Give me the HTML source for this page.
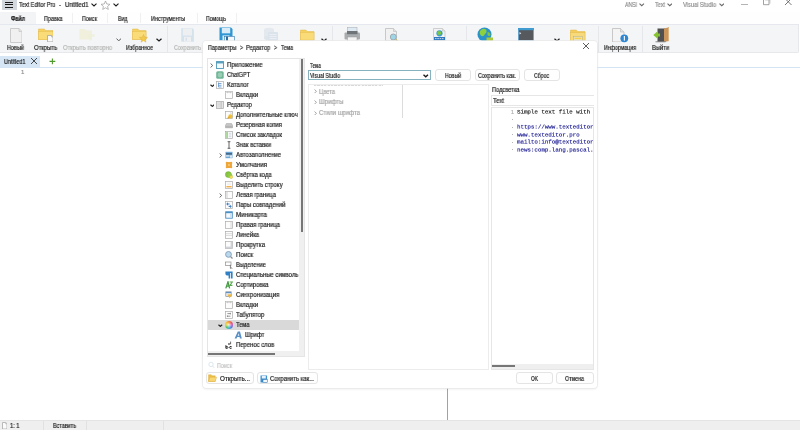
<!DOCTYPE html>
<html><head><meta charset="utf-8"><title>Text Editor Pro</title>
<style>
html,body{margin:0;padding:0;}
body{width:800px;height:430px;position:relative;overflow:hidden;background:#fff;font-family:"Liberation Sans",sans-serif;font-size:6.3px;color:#1a1a1a;}
.a{position:absolute;}
.t{position:absolute;white-space:nowrap;line-height:10px;height:10px;font-size:6.3px;transform-origin:0 50%;-webkit-text-stroke:0.18px;will-change:transform;}
.mono{font-family:"Liberation Mono",monospace;-webkit-text-stroke:0.45px;}
.btn{position:absolute;box-sizing:border-box;border:0.9px solid #e4e4e4;border-radius:3px;background:#fefefe;}
</style></head><body>
<div class="a" style="left:2.3px;top:0px;width:14.4px;height:10px;background:#d3d7de;"></div><div class="a" style="left:5px;top:1.6999999999999997px;width:7.6px;height:1.2px;background:#1a1a1a;"></div><div class="a" style="left:5px;top:4.300000000000001px;width:7.6px;height:1.2px;background:#1a1a1a;"></div><div class="a" style="left:5px;top:6.800000000000001px;width:7.6px;height:1.2px;background:#1a1a1a;"></div><div class="t" style="left:18.6px;top:0.35px;transform:scaleX(0.881);">Text Editor Pro</div><div class="t" style="left:58.5px;top:0.35px;transform:scaleX(0.948);">-</div><div class="t" style="left:65px;top:0.35px;transform:scaleX(0.945);">Untitled1</div><svg class="a" style="left:90.5px;top:3.25px" width="6" height="4.0" viewBox="0 0 6 4.0"><path d="M0.5 0.7 L3.0 3.0 L5.5 0.7" fill="none" stroke="#1a1a1a" stroke-width="1.1"/></svg><svg class="a" style="left:100px;top:0px" width="11" height="10" viewBox="0 0 11 10"><path d="M5.5 1 L6.8 4 L10 4.3 L7.6 6.4 L8.3 9.4 L5.5 7.8 L2.7 9.4 L3.4 6.4 L1 4.3 L4.2 4 Z" fill="none" stroke="#9a9a9a" stroke-width="0.7"/></svg><svg class="a" style="left:112.5px;top:3.25px" width="6" height="4.0" viewBox="0 0 6 4.0"><path d="M0.5 0.7 L3.0 3.0 L5.5 0.7" fill="none" stroke="#1a1a1a" stroke-width="1.1"/></svg><div class="t" style="left:625px;top:-0.15px;transform:scaleX(0.816);color:#8c8c8c;">ANSI</div><svg class="a" style="left:639.0px;top:3.175px" width="5.5" height="3.75" viewBox="0 0 5.5 3.75"><path d="M0.5 0.7 L2.75 2.75 L5.0 0.7" fill="none" stroke="#6a6a6a" stroke-width="1.1"/></svg><div class="t" style="left:654.5px;top:-0.15px;transform:scaleX(0.865);color:#8c8c8c;">Text</div><svg class="a" style="left:666.5px;top:3.175px" width="5.5" height="3.75" viewBox="0 0 5.5 3.75"><path d="M0.5 0.7 L2.75 2.75 L5.0 0.7" fill="none" stroke="#6a6a6a" stroke-width="1.1"/></svg><div class="t" style="left:683px;top:-0.15px;transform:scaleX(0.901);color:#8c8c8c;">Visual Studio</div><svg class="a" style="left:718.5px;top:3.175px" width="5.5" height="3.75" viewBox="0 0 5.5 3.75"><path d="M0.5 0.7 L2.75 2.75 L5.0 0.7" fill="none" stroke="#6a6a6a" stroke-width="1.1"/></svg><div class="a" style="left:741px;top:4.1px;width:6.5px;height:0.8px;background:#b4b4b4;"></div><svg class="a" style="left:762px;top:0px" width="9" height="6" viewBox="0 0 9 6"><path d="M1.5 0 V4.7 H7 V0" fill="none" stroke="#8a8a8a" stroke-width="0.8"/><path d="M3 0 H8 V3.5" fill="none" stroke="#b0b0b0" stroke-width="0.6"/></svg><svg class="a" style="left:784px;top:0px" width="9" height="6" viewBox="0 0 9 6"><path d="M1 -1.5 L7.5 5 M7.5 -1.5 L1 5" fill="none" stroke="#555" stroke-width="0.8"/></svg><div class="a" style="left:0px;top:12px;width:800px;height:12px;background:#fefefe;"></div><div class="a" style="left:0px;top:12.9px;width:34.7px;height:11.5px;background:#f3f4f6;box-shadow:0 0 0 0.6px #e9ebee;"></div><div class="a" style="left:72px;top:13px;width:0.8px;height:10px;background:#f0f0f2;"></div><div class="a" style="left:106.5px;top:13px;width:0.8px;height:10px;background:#f0f0f2;"></div><div class="a" style="left:140px;top:13px;width:0.8px;height:10px;background:#f0f0f2;"></div><div class="a" style="left:196.5px;top:13px;width:0.8px;height:10px;background:#f0f0f2;"></div><div class="a" style="left:236px;top:13px;width:0.8px;height:10px;background:#f0f0f2;"></div><div class="t" style="left:10.5px;top:14.05px;transform:scaleX(0.836);font-weight:bold;">Файл</div><div class="t" style="left:44px;top:14.05px;transform:scaleX(0.869);">Правка</div><div class="t" style="left:82px;top:14.05px;transform:scaleX(0.859);">Поиск</div><div class="t" style="left:118px;top:14.05px;transform:scaleX(0.833);">Вид</div><div class="t" style="left:151px;top:14.05px;transform:scaleX(0.866);">Инструменты</div><div class="t" style="left:206px;top:14.05px;transform:scaleX(0.822);">Помощь</div><div class="a" style="left:0px;top:24px;width:797.8px;height:28.4px;background:#f4f5f6;border-bottom:0.9px solid #e6e8eb;border-right:0.9px solid #e6e8eb;border-radius:0 0 2px 0;"></div><div class="a" style="left:0px;top:23.6px;width:798.6px;height:0.8px;background:#e6e8ef;"></div><div class="a" style="left:167.1px;top:26px;width:0.8px;height:26px;background:#e6e7ea;"></div><div class="a" style="left:332.1px;top:26px;width:0.8px;height:26px;background:#e6e7ea;"></div><div class="a" style="left:466.1px;top:26px;width:0.8px;height:26px;background:#e6e7ea;"></div><div class="a" style="left:598.1px;top:26px;width:0.8px;height:26px;background:#e6e7ea;"></div><div class="a" style="left:642.1px;top:26px;width:0.8px;height:26px;background:#e6e7ea;"></div><svg class="a" style="left:9.5px;top:28px" width="12.5" height="15" viewBox="0 0 12.5 15"><path d="M0.5 0.5 H9.0 L12.0 3.5 V14.5 H0.5 Z" fill="#f0f0f0" stroke="#c0c0c0" stroke-width="0.8"/><path d="M9.0 0.5 V3.5 H12.0" fill="#e2e2e2" stroke="#c0c0c0" stroke-width="0.6"/></svg><svg class="a" style="left:37.5px;top:27.8px" width="15.5" height="12.2" viewBox="0 0 15.5 12.2"><g opacity="1"><path d="M0.5 1 H6.2 L7.75 2.5 H15.0 V11.7 H0.5 Z" fill="#f5d15f" stroke="#e2b84a" stroke-width="0.5"/><rect x="0.5" y="3.6599999999999997" width="14.5" height="8.04" fill="#f9dc78" stroke="#e2b84a" stroke-width="0.4"/></g></svg><svg class="a" style="left:46.5px;top:35px" width="6.6" height="7.4" viewBox="0 0 6.6 7.4"><path d="M0.5 0.5 H4.6 L6.1 2 V6.9 H0.5 Z" fill="#fafafa" stroke="#a5a5a5" stroke-width="0.8"/><path d="M4.6 0.5 V2 H6.1" fill="#e2e2e2" stroke="#a5a5a5" stroke-width="0.6"/></svg><svg class="a" style="left:79px;top:27.5px" width="18" height="14" viewBox="0 0 18 14"><path d="M0.5 1 H6 L7 2.4 H13 V11.5 H0.5Z" fill="#f0f0da" opacity="0.9"/><path d="M9 6 H15.5 V9 H12.5 V12.5 H10.5 V9 H9Z" fill="#eef0dc" opacity="0.8"/></svg><svg class="a" style="left:115.5px;top:37.575px" width="5.5" height="3.75" viewBox="0 0 5.5 3.75"><path d="M0.5 0.7 L2.75 2.75 L5.0 0.7" fill="none" stroke="#5a5a5a" stroke-width="1.0"/></svg><svg class="a" style="left:132px;top:28px" width="14.5" height="12" viewBox="0 0 14.5 12"><g opacity="1"><path d="M0.5 1 H5.800000000000001 L7.25 2.5 H14.0 V11.5 H0.5 Z" fill="#f5d15f" stroke="#e2b84a" stroke-width="0.5"/><rect x="0.5" y="3.5999999999999996" width="13.5" height="7.899999999999999" fill="#f9dc78" stroke="#e2b84a" stroke-width="0.4"/></g></svg><svg class="a" style="left:139px;top:34px" width="9" height="9" viewBox="0 0 9 9"><path d="M4.5 0.5 L5.6 3.2 L8.5 3.4 L6.3 5.3 L7 8.2 L4.5 6.6 L2 8.2 L2.7 5.3 L0.5 3.4 L3.4 3.2 Z" fill="#f3c94a" stroke="#d9a93a" stroke-width="0.4"/></svg><svg class="a" style="left:156.0px;top:37.55px" width="6" height="4.0" viewBox="0 0 6 4.0"><path d="M0.5 0.7 L3.0 3.0 L5.5 0.7" fill="none" stroke="#1a1a1a" stroke-width="1.2"/></svg><svg class="a" style="left:180.5px;top:28px" width="13.2" height="14" viewBox="0 0 13.2 14"><g opacity="0.85"><path d="M0.3 0.3 H11.4 L12.9 1.8 V13.7 H0.3 Z" fill="#cfdfeb"/><rect x="1.8" y="0.6" width="9.2" height="7" fill="#eceef0"/><rect x="3" y="8.8" width="7" height="4.9" fill="#eef0f2"/><rect x="4.6" y="9.8" width="1.4" height="3" fill="#d3dde6"/></g></svg><svg class="a" style="left:219px;top:27px" width="14" height="14" viewBox="0 0 14 14"><g opacity="1"><path d="M0.5 0.5 H12 L13.5 2 V13.5 H0.5 Z" fill="#2e96d3"/><rect x="2.8000000000000003" y="1" width="8.4" height="5.32" fill="#d9ecf7"/><rect x="3.5" y="8.4" width="7.0" height="5.1000000000000005" fill="#fff" opacity="0.85"/></g></svg><svg class="a" style="left:224px;top:36px" width="12" height="6" viewBox="0 0 12 6"><rect x="0.3" y="0.3" width="10" height="6" fill="#f4f8fb" stroke="#2e78b0" stroke-width="0.6"/><rect x="2" y="0.5" width="2" height="5" fill="#2e6da0"/></svg><svg class="a" style="left:262px;top:27px" width="17" height="15" viewBox="0 0 17 15"><g opacity="0.75"><ellipse cx="7" cy="3" rx="5" ry="2.3" fill="#dfe6ee"/><rect x="2" y="3" width="10" height="8" fill="#dfe6ee"/><ellipse cx="7" cy="11" rx="5" ry="2.3" fill="#d7e0ea"/><rect x="6" y="5" width="10" height="9" rx="1" fill="#d3dde8"/><path d="M7.5 7.5H14.5M7.5 9.5H14.5M7.5 11.5H14.5" stroke="#eef2f6" stroke-width="0.8"/></g></svg><svg class="a" style="left:300px;top:29px" width="14.5" height="11.5" viewBox="0 0 14.5 11.5"><g opacity="1"><path d="M0.5 1 H5.800000000000001 L7.25 2.5 H14.0 V11.0 H0.5 Z" fill="#f5d15f" stroke="#e2b84a" stroke-width="0.5"/><rect x="0.5" y="3.4499999999999997" width="13.5" height="7.549999999999999" fill="#f9dc78" stroke="#e2b84a" stroke-width="0.4"/></g></svg><svg class="a" style="left:320.5px;top:37.55px" width="6" height="4.0" viewBox="0 0 6 4.0"><path d="M0.5 0.7 L3.0 3.0 L5.5 0.7" fill="none" stroke="#1a1a1a" stroke-width="1.2"/></svg><svg class="a" style="left:344px;top:27px" width="17" height="15" viewBox="0 0 17 15"><rect x="3.5" y="0.5" width="9.5" height="6" fill="#dfe9f2" stroke="#aab4bd" stroke-width="0.6"/><rect x="0.5" y="5.5" width="15.5" height="7" rx="1" fill="#a9adb0"/><rect x="3" y="4" width="10.5" height="3.2" fill="#6f7478"/><rect x="3.5" y="10" width="9.5" height="4.3" fill="#f3f3f3" stroke="#999" stroke-width="0.5"/></svg><svg class="a" style="left:385px;top:27.5px" width="12" height="13.5" viewBox="0 0 12 13.5"><path d="M0.5 0.5 H8.5 L11.5 3.5 V13.0 H0.5 Z" fill="#f1f1f1" stroke="#bcbcbc" stroke-width="0.8"/><path d="M8.5 0.5 V3.5 H11.5" fill="#e2e2e2" stroke="#bcbcbc" stroke-width="0.6"/></svg><svg class="a" style="left:389px;top:33px" width="10" height="9" viewBox="0 0 10 9"><circle cx="4.3" cy="4" r="3" fill="#9fd6e6" stroke="#9aa4ab" stroke-width="0.9"/><path d="M6.6 6.3 L8.8 8.3" stroke="#c9b45a" stroke-width="1.2"/></svg><svg class="a" style="left:433px;top:27.5px" width="12.5" height="13.5" viewBox="0 0 12.5 13.5"><path d="M0.5 0.5 H9.5 L12.0 3 V13.0 H0.5 Z" fill="#f3f3f3" stroke="#c4c4c4" stroke-width="0.8"/><path d="M9.5 0.5 V3 H12.0" fill="#e2e2e2" stroke="#c4c4c4" stroke-width="0.6"/></svg><svg class="a" style="left:434px;top:29px" width="11" height="12" viewBox="0 0 11 12"><circle cx="5.5" cy="4.3" r="3.1" fill="#3aa0c8"/><circle cx="5.2" cy="4" r="2" fill="#7dc843"/><rect x="0" y="8" width="11" height="3.2" fill="#2f78c0"/><path d="M1 9.6H10" stroke="#cfe3f5" stroke-width="0.9" stroke-dasharray="1.6 0.7"/></svg><svg class="a" style="left:476.5px;top:26.5px" width="17" height="16" viewBox="0 0 17 16"><circle cx="7.5" cy="7.5" r="7" fill="#2b93c9"/><path d="M3 4 Q6 0.5 9 2.5 Q10.5 5 8 7 Q6.5 10 4.5 9 Q2 7 3 4Z" fill="#8ed13f"/><path d="M10.5 5 Q13 5 13.5 8 Q12 10 10.5 8Z" fill="#7bc63a"/><rect x="9.5" y="10.5" width="6.5" height="4" fill="#a8c93a"/></svg><svg class="a" style="left:518px;top:28px" width="16" height="13" viewBox="0 0 16 13"><rect x="0.4" y="0.4" width="15" height="12" fill="#565a5e" stroke="#5aa5d2" stroke-width="0.8"/><rect x="0" y="0" width="15.8" height="2.2" fill="#3f9bd0"/><path d="M1.5 4 L3.3 5.3 L1.5 6.6Z" fill="#e8e8e8"/></svg><svg class="a" style="left:553.5px;top:37.55px" width="6" height="4.0" viewBox="0 0 6 4.0"><path d="M0.5 0.7 L3.0 3.0 L5.5 0.7" fill="none" stroke="#1a1a1a" stroke-width="1.2"/></svg><svg class="a" style="left:570px;top:29px" width="15.5" height="12.5" viewBox="0 0 15.5 12.5"><g opacity="1"><path d="M0.5 1 H6.2 L7.75 2.5 H15.0 V12.0 H0.5 Z" fill="#f3cc5c" stroke="#e2b84a" stroke-width="0.5"/><rect x="0.5" y="3.75" width="14.5" height="8.25" fill="#f7da7c" stroke="#e2b84a" stroke-width="0.4"/></g></svg><svg class="a" style="left:573px;top:36px" width="10" height="5" viewBox="0 0 10 5"><rect x="0.4" y="0.4" width="9" height="4.6" fill="#e9e4c9" stroke="#b9ad78" stroke-width="0.5"/><rect x="1.5" y="1.6" width="6.8" height="1.6" fill="#f5d24e"/></svg><svg class="a" style="left:612px;top:27.5px" width="12.5" height="14.5" viewBox="0 0 12.5 14.5"><path d="M0.5 0.5 H8.5 L12.0 4 V14.0 H0.5 Z" fill="#f4f4f4" stroke="#bcbcbc" stroke-width="0.8"/><path d="M8.5 0.5 V4 H12.0" fill="#e2e2e2" stroke="#bcbcbc" stroke-width="0.6"/></svg><svg class="a" style="left:619.5px;top:34px" width="9" height="9" viewBox="0 0 9 9"><circle cx="4.3" cy="4.3" r="3.9" fill="#2f86d0"/><rect x="3.8" y="2" width="1.1" height="4.6" fill="#fff"/></svg><svg class="a" style="left:652.5px;top:26.5px" width="17" height="16" viewBox="0 0 17 16"><rect x="4.5" y="1.5" width="8" height="13.5" fill="#4e5052"/><path d="M11 1.5 L16 0.3 V14 L11 15Z" fill="#c8955a"/><path d="M15.2 0.5 L16 0.3 V14 L15.2 14.2Z" fill="#e2bd8e"/><rect x="2.5" y="14.3" width="10" height="1" fill="#8a8a8a"/><path d="M0.3 8 L4 4.8 V6.6 H7 V9.4 H4 V11.2Z" fill="#86c232"/></svg><div class="t" style="left:6.5px;top:43.35px;transform:scaleX(0.864);">Новый</div><div class="t" style="left:33.7px;top:43.35px;transform:scaleX(0.934);">Открыть</div><div class="t" style="left:63px;top:43.35px;transform:scaleX(0.917);color:#b4b4b4;">Открыть повторно</div><div class="t" style="left:125.5px;top:43.35px;transform:scaleX(0.846);">Избранное</div><div class="t" style="left:174px;top:43.35px;transform:scaleX(0.863);color:#b4b4b4;">Сохранить</div><div class="t" style="left:604px;top:43.35px;transform:scaleX(0.830);">Информация</div><div class="t" style="left:652px;top:43.35px;transform:scaleX(0.911);">Выйти</div><div class="a" style="left:0px;top:55.7px;width:40.3px;height:11.6px;background:#d6e6f4;"></div><div class="a" style="left:0px;top:67.2px;width:800px;height:0.9px;background:#d3e5f5;"></div><div class="t" style="left:3.7px;top:56.85px;transform:scaleX(0.865);">Untitled1</div><svg class="a" style="left:30px;top:57.2px" width="8" height="8" viewBox="0 0 8 8"><path d="M1 1 L7 7 M7 1 L1 7" stroke="#222" stroke-width="0.8" fill="none"/></svg><svg class="a" style="left:49px;top:57.5px" width="7" height="7" viewBox="0 0 7 7"><path d="M3.4 0.5 V6.3 M0.5 3.4 H6.3" stroke="#4e9a2c" stroke-width="1.1" fill="none"/></svg><div class="t" style="left:21.2px;top:67.35px;font-size:6px;color:#929292;">1</div><div class="a" style="left:447.05px;top:68px;width:0.75px;height:352px;background:#a2a2a2;"></div><div class="a" style="left:0px;top:420px;width:800px;height:10px;background:#efefef;"></div><div class="a" style="left:0px;top:419.6px;width:800px;height:0.7px;background:#e4e4e4;"></div><div class="a" style="left:43.1px;top:421px;width:0.8px;height:9px;background:#e1e1e1;"></div><div class="a" style="left:86.1px;top:421px;width:0.8px;height:9px;background:#e1e1e1;"></div><div class="a" style="left:163.1px;top:421px;width:0.8px;height:9px;background:#e1e1e1;"></div><svg class="a" style="left:1.5px;top:421.5px" width="5.5" height="7.5" viewBox="0 0 5.5 7.5"><path d="M0.5 0.5 H3.7 L5.0 1.8 V7.0 H0.5 Z" fill="#fbfbfb" stroke="#aaa" stroke-width="0.8"/><path d="M3.7 0.5 V1.8 H5.0" fill="#e2e2e2" stroke="#aaa" stroke-width="0.6"/></svg><div class="t" style="left:10px;top:420.65px;transform:scaleX(0.903);">1: 1</div><div class="t" style="left:53px;top:420.65px;transform:scaleX(0.861);">Вставить</div><div class="a" style="left:203.2px;top:40.6px;width:394.2px;height:347.4px;background:#fff;border-radius:3px;box-shadow:0 0 0 0.7px #e9e9e9,0 1px 3px rgba(0,0,0,.09);"></div><div class="t" style="left:207.75px;top:43.35px;transform:scaleX(0.849);">Параметры</div><div class="t" style="left:239.6px;top:43.35px;transform:scaleX(0.814);">&gt;</div><div class="t" style="left:245.9px;top:43.35px;transform:scaleX(0.898);">Редактор</div><div class="t" style="left:274.25px;top:43.35px;transform:scaleX(0.814);">&gt;</div><div class="t" style="left:280.9px;top:43.35px;transform:scaleX(0.816);">Тема</div><svg class="a" style="left:582.2px;top:41.6px" width="8" height="8" viewBox="0 0 8 8"><path d="M1 1 L7 7 M7 1 L1 7" stroke="#333" stroke-width="0.8" fill="none"/></svg><div class="a" style="left:207px;top:58px;width:98px;height:299px;box-sizing:border-box;border:1px solid #e5e5e5;background:#fff;"></div><div class="a" style="left:299px;top:59px;width:5px;height:292px;background:#f0f0f0;"></div><div class="a" style="left:301.3px;top:59px;width:1.9px;height:173.3px;background:#767676;"></div><div class="a" style="left:208px;top:351px;width:96px;height:5px;background:#f0f0f0;"></div><div class="a" style="left:207.5px;top:353px;width:67.5px;height:1.7px;background:#767676;"></div><div class="a" style="left:207.5px;top:320.3px;width:91.5px;height:9.6px;background:#d9d9d9;"></div><svg class="a" style="left:215.9px;top:61px" width="8" height="8" viewBox="0 0 8 8"><rect x="0.5" y="0.6" width="7" height="6.9" fill="#f4f9fc" stroke="#4f98b8" stroke-width="0.9"/><rect x="0.5" y="0.6" width="7" height="1.3" fill="#4f98b8"/><rect x="1" y="2.2" width="6" height="0.7" fill="#8fc1d6"/></svg><div class="t" style="left:227px;top:60.35px;transform:scaleX(0.961);">Приложение</div><svg class="a" style="left:210.1px;top:62.7px" width="3.3" height="5" viewBox="0 0 3.3 5"><path d="M0.6 0.5 L2.6999999999999997 2.5 L0.6 4.5" fill="none" stroke="#555" stroke-width="0.9"/></svg><svg class="a" style="left:215.9px;top:71px" width="8" height="8" viewBox="0 0 8 8"><rect x="0.2" y="0.2" width="7.5" height="7.6" rx="1.5" fill="#6fb596"/><circle cx="4" cy="4" r="2.4" fill="#9bcdb5"/></svg><div class="t" style="left:227px;top:70.35px;transform:scaleX(0.876);">ChatGPT</div><svg class="a" style="left:215.9px;top:81px" width="8" height="8" viewBox="0 0 8 8"><rect x="0.4" y="0.4" width="7.2" height="7.2" fill="#fcfcfc" stroke="#ababab" stroke-width="0.7"/><path d="M2.5 1.5 V6 M2.5 2.5 H5.5 M2.5 4.3 H5.5 M2.5 6 H5.5" stroke="#4a86c5" stroke-width="0.7" fill="none"/></svg><div class="t" style="left:227px;top:80.35px;transform:scaleX(0.960);">Каталог</div><svg class="a" style="left:209.5px;top:83.575px" width="4.7" height="3.35" viewBox="0 0 4.7 3.35"><path d="M0.5 0.7 L2.35 2.35 L4.2 0.7" fill="none" stroke="#222" stroke-width="1.2"/></svg><svg class="a" style="left:224.9px;top:91px" width="8" height="8" viewBox="0 0 8 8"><rect x="0.4" y="0.4" width="7.2" height="7.2" fill="#fcfcfc" stroke="#ababab" stroke-width="0.7"/><rect x="0.6" y="0.6" width="6.8" height="1.2" fill="#d9d9d9"/><rect x="2.6" y="0.6" width="0.5" height="1.6" fill="#aaa"/><rect x="4.9" y="0.6" width="0.5" height="1.6" fill="#aaa"/></svg><div class="t" style="left:236px;top:90.35px;transform:scaleX(0.911);">Вкладки</div><svg class="a" style="left:215.9px;top:101px" width="8" height="8" viewBox="0 0 8 8"><rect x="0.4" y="0.4" width="7.2" height="7.2" fill="#e4e4e4" stroke="#a9a9a9" stroke-width="0.7"/><rect x="4.6" y="0.8" width="1" height="6.4" fill="#b9b9b9"/><path d="M1.6 2.2H4M1.6 3.6H4M1.6 5H4" stroke="#cfcfcf" stroke-width="0.5"/></svg><div class="t" style="left:227px;top:100.35px;transform:scaleX(0.922);">Редактор</div><svg class="a" style="left:209.5px;top:103.575px" width="4.7" height="3.35" viewBox="0 0 4.7 3.35"><path d="M0.5 0.7 L2.35 2.35 L4.2 0.7" fill="none" stroke="#222" stroke-width="1.2"/></svg><svg class="a" style="left:224.9px;top:111px" width="8" height="8" viewBox="0 0 8 8"><rect x="0.4" y="0.4" width="7.2" height="7.2" fill="#fcfcfc" stroke="#ababab" stroke-width="0.7"/><path d="M5.2 0.4 L7.6 2.8 H5.2Z" fill="#dcdcdc"/><circle cx="5.4" cy="5.4" r="2.1" fill="#efbf3a"/><path d="M2.6 7.4 L4.6 5.8" stroke="#dfa528" stroke-width="1.3"/></svg><div class="t" style="left:236px;top:110.35px;transform:scaleX(0.935);">Дополнительные ключ</div><svg class="a" style="left:224.9px;top:121px" width="8" height="8" viewBox="0 0 8 8"><path d="M1.3 2.6 H6.7 L7.5 4.6 V6.8 H0.5 V4.6 Z" fill="#c9c9c9" stroke="#9d9d9d" stroke-width="0.5"/><rect x="0.5" y="4.8" width="7" height="2" fill="#b4b4b4"/></svg><div class="t" style="left:236px;top:120.35px;transform:scaleX(0.934);">Резервная копия</div><svg class="a" style="left:224.9px;top:131px" width="8" height="8" viewBox="0 0 8 8"><rect x="0.4" y="0.4" width="7.2" height="7.2" fill="#fcfcfc" stroke="#ababab" stroke-width="0.7"/><rect x="1.2" y="0.9" width="1.7" height="6.2" fill="#9fd18b"/><path d="M3.8 2.3H6.3M3.8 4H6.3M3.8 5.7H6.3" stroke="#b9c7d6" stroke-width="0.7"/></svg><div class="t" style="left:236px;top:130.35px;transform:scaleX(0.938);">Список закладок</div><svg class="a" style="left:224.9px;top:141px" width="8" height="8" viewBox="0 0 8 8"><path d="M2.6 0.7 H5.4 M4 0.7 V7.3 M2.6 7.3 H5.4" stroke="#3c3c3c" stroke-width="0.8" fill="none"/></svg><div class="t" style="left:236px;top:140.35px;transform:scaleX(0.929);">Знак вставки</div><svg class="a" style="left:224.9px;top:151px" width="8" height="8" viewBox="0 0 8 8"><rect x="0.5" y="0.8" width="7" height="6.4" fill="#6fa8d6"/><rect x="1" y="2.2" width="6" height="1.3" fill="#3d5a78"/><rect x="1" y="4.3" width="3.6" height="1.2" fill="#e8f1f8"/><rect x="5" y="4.3" width="2" height="2.4" fill="#dfe9f2"/></svg><div class="t" style="left:236px;top:150.35px;transform:scaleX(0.938);">Автозаполнение</div><svg class="a" style="left:219.4px;top:152.7px" width="3.3" height="5" viewBox="0 0 3.3 5"><path d="M0.6 0.5 L2.6999999999999997 2.5 L0.6 4.5" fill="none" stroke="#555" stroke-width="0.9"/></svg><svg class="a" style="left:224.9px;top:161px" width="8" height="8" viewBox="0 0 8 8"><circle cx="4" cy="4" r="3.1" fill="#eea63a"/><circle cx="1.9" cy="1.9" r="1.2" fill="#eea63a"/><circle cx="6.1" cy="1.9" r="1.2" fill="#eea63a"/><circle cx="1.9" cy="6.1" r="1.2" fill="#eea63a"/><circle cx="6.1" cy="6.1" r="1.2" fill="#eea63a"/><circle cx="4" cy="4" r="0.9" fill="#f6d08e"/></svg><div class="t" style="left:236px;top:160.35px;transform:scaleX(0.965);">Умолчания</div><svg class="a" style="left:224.9px;top:171px" width="8" height="8" viewBox="0 0 8 8"><circle cx="3.3" cy="3.6" r="3" fill="#86c440" stroke="#6aa834" stroke-width="0.4"/><circle cx="5" cy="4.6" r="2.4" fill="#8fcb47"/><circle cx="6.1" cy="6.1" r="1.5" fill="#f6e05a" stroke="#c9b03a" stroke-width="0.4"/></svg><div class="t" style="left:236px;top:170.35px;transform:scaleX(0.907);">Свёртка кода</div><svg class="a" style="left:224.9px;top:181px" width="8" height="8" viewBox="0 0 8 8"><rect x="0.4" y="0.4" width="7.2" height="7.2" fill="#fcfcfc" stroke="#ababab" stroke-width="0.7"/><rect x="1.4" y="5" width="5.2" height="1.4" fill="#f1b04a"/><path d="M2 2.2H6M2 3.6H6" stroke="#e1e1e1" stroke-width="0.5"/></svg><div class="t" style="left:236px;top:180.35px;transform:scaleX(0.934);">Выделить строку</div><svg class="a" style="left:224.9px;top:191px" width="8" height="8" viewBox="0 0 8 8"><rect x="0.4" y="0.4" width="7.2" height="7.2" fill="#fcfcfc" stroke="#ababab" stroke-width="0.7"/><rect x="1.2" y="0.9" width="1.5" height="6.2" fill="#dcdcdc"/></svg><div class="t" style="left:236px;top:190.35px;transform:scaleX(0.931);">Левая граница</div><svg class="a" style="left:219.4px;top:192.7px" width="3.3" height="5" viewBox="0 0 3.3 5"><path d="M0.6 0.5 L2.6999999999999997 2.5 L0.6 4.5" fill="none" stroke="#555" stroke-width="0.9"/></svg><svg class="a" style="left:224.9px;top:201px" width="8" height="8" viewBox="0 0 8 8"><rect x="0.4" y="0.4" width="7.2" height="7.2" fill="#fcfcfc" stroke="#ababab" stroke-width="0.7"/><path d="M1.2 3 L3 1.3 V2.4 H4.6 V3.6 H3 V4.7Z" fill="#3f7fc6"/><path d="M6.8 5.4 L5 7.1 V6 H3.6 V4.8 H5 V3.7Z" fill="#3f7fc6"/></svg><div class="t" style="left:236px;top:200.35px;transform:scaleX(0.943);">Пары совпадений</div><svg class="a" style="left:224.9px;top:211px" width="8" height="8" viewBox="0 0 8 8"><rect x="0.7" y="0.8" width="6.6" height="6.4" fill="#f6fafd" stroke="#4b8fc4" stroke-width="0.9"/><rect x="0.7" y="0.8" width="6.6" height="1.4" fill="#4b8fc4"/><rect x="5" y="2.4" width="1.8" height="4.2" fill="#cfe0ee"/></svg><div class="t" style="left:236px;top:210.35px;transform:scaleX(0.974);">Миникарта</div><svg class="a" style="left:224.9px;top:221px" width="8" height="8" viewBox="0 0 8 8"><rect x="0.4" y="0.4" width="7.2" height="7.2" fill="#fcfcfc" stroke="#ababab" stroke-width="0.7"/><rect x="5.3" y="0.9" width="1.5" height="6.2" fill="#e4e4e4"/></svg><div class="t" style="left:236px;top:220.35px;transform:scaleX(0.939);">Правая граница</div><svg class="a" style="left:224.9px;top:231px" width="8" height="8" viewBox="0 0 8 8"><rect x="0.4" y="0.4" width="7.2" height="7.2" fill="#fcfcfc" stroke="#ababab" stroke-width="0.7"/><path d="M1 2.6H7M1 4.4H7" stroke="#c4c4c4" stroke-width="0.6"/></svg><div class="t" style="left:236px;top:230.35px;transform:scaleX(0.937);">Линейка</div><svg class="a" style="left:224.9px;top:241px" width="8" height="8" viewBox="0 0 8 8"><rect x="0.4" y="0.4" width="7.2" height="7.2" fill="#fcfcfc" stroke="#ababab" stroke-width="0.7"/><rect x="5.6" y="0.8" width="1.6" height="6.4" fill="#cfd3d7"/><rect x="0.8" y="5.6" width="6.4" height="1.6" fill="#cfd3d7"/></svg><div class="t" style="left:236px;top:240.35px;transform:scaleX(0.962);">Прокрутка</div><svg class="a" style="left:224.9px;top:251px" width="8" height="8" viewBox="0 0 8 8"><circle cx="3.5" cy="3.4" r="2.9" fill="#bcd8ec" stroke="#7f9db8" stroke-width="0.9"/><path d="M5.6 5.6 L7.5 7.5" stroke="#8a8f94" stroke-width="1.3"/></svg><div class="t" style="left:236px;top:250.35px;transform:scaleX(0.974);">Поиск</div><svg class="a" style="left:224.9px;top:261px" width="8" height="8" viewBox="0 0 8 8"><rect x="0.6" y="1" width="5.4" height="3.6" fill="#fdfdfd" stroke="#8e8e8e" stroke-width="0.7"/><path d="M5.4 3.8 V7.4 L6.3 6.6 L7.1 7.8" stroke="#555" stroke-width="0.7" fill="#fff"/></svg><div class="t" style="left:236px;top:260.35px;transform:scaleX(0.899);">Выделение</div><svg class="a" style="left:224.9px;top:271px" width="8" height="8" viewBox="0 0 8 8"><path d="M0.4 0.6 H7.6 V7.6 H6 V2 H5.2 V7.6 H3.6 V4.6 Q0.4 4.6 0.4 2.4Z" fill="#2f80c4"/></svg><div class="t" style="left:236px;top:270.35px;transform:scaleX(0.931);">Специальные символь</div><svg class="a" style="left:224.9px;top:281px" width="8" height="8" viewBox="0 0 8 8"><path d="M0.8 7.4 L3 0.8 L4.6 7.4 M1.6 5.2H4" stroke="#479a47" stroke-width="1.3" fill="none"/><path d="M4.6 1H7.4L4.8 4.4H7.4" stroke="#5aa84f" stroke-width="1.1" fill="none"/></svg><div class="t" style="left:236px;top:280.35px;transform:scaleX(0.943);">Сортировка</div><svg class="a" style="left:224.9px;top:291px" width="8" height="8" viewBox="0 0 8 8"><rect x="0.8" y="0.8" width="5.4" height="4.6" fill="#e4e9ee" stroke="#6d7f92" stroke-width="0.6"/><path d="M2.4 3.6 L7.2 3.2 L4.6 7.3Z" fill="#f0b63a"/><path d="M1 1.6 H6" stroke="#4b7fb5" stroke-width="0.9"/></svg><div class="t" style="left:236px;top:290.35px;transform:scaleX(0.949);">Синхронизация</div><svg class="a" style="left:224.9px;top:301px" width="8" height="8" viewBox="0 0 8 8"><rect x="0.4" y="0.4" width="7.2" height="7.2" fill="#fcfcfc" stroke="#ababab" stroke-width="0.7"/><rect x="0.6" y="0.6" width="6.8" height="1.2" fill="#d9d9d9"/><rect x="2.6" y="0.6" width="0.5" height="1.6" fill="#aaa"/><rect x="4.9" y="0.6" width="0.5" height="1.6" fill="#aaa"/></svg><div class="t" style="left:236px;top:300.35px;transform:scaleX(0.911);">Вкладки</div><svg class="a" style="left:224.9px;top:311px" width="8" height="8" viewBox="0 0 8 8"><rect x="0.4" y="0.4" width="7.2" height="7.2" fill="#fcfcfc" stroke="#ababab" stroke-width="0.7"/><path d="M2.4 2.6H5.4M5.4 1.8V3.4M2.4 5.2H5.4M2.4 4.4V6" stroke="#555" stroke-width="0.6" fill="none"/></svg><div class="t" style="left:236px;top:310.35px;transform:scaleX(0.929);">Табулятор</div><div class="a" style="left:224.6px;top:320.7px;width:8.6px;height:8.6px;border-radius:50%;background:radial-gradient(circle,rgba(255,255,255,.85) 0,rgba(255,255,255,0) 55%),conic-gradient(#f08a3a,#e8556a,#c45fc8,#5a78e0,#3fb4dc,#58c46a,#d8d83e,#f3c23c,#f08a3a);"></div><div class="t" style="left:236px;top:320.35px;transform:scaleX(0.910);">Тема</div><svg class="a" style="left:218.3px;top:323.575px" width="4.7" height="3.35" viewBox="0 0 4.7 3.35"><path d="M0.5 0.7 L2.35 2.35 L4.2 0.7" fill="none" stroke="#222" stroke-width="1.2"/></svg><svg class="a" style="left:233.9px;top:331px" width="8" height="8" viewBox="0 0 8 8"><path d="M0.6 7.5 H2.6 L3.2 6 H5.6 L5.9 7.5 H7.8 L6 0.5 H3.8Z" fill="#5a90c6"/><path d="M3.7 4.8 L4.7 2.2 L5.3 4.8Z" fill="#eaf1f8"/></svg><div class="t" style="left:245px;top:330.35px;transform:scaleX(0.932);">Шрифт</div><svg class="a" style="left:224.9px;top:341px" width="8" height="8" viewBox="0 0 8 8"><path d="M5.6 0.6 V3 H3.4 M4.4 2 L3.4 3 L4.4 4" stroke="#444" stroke-width="0.8" fill="none"/><path d="M0.9 4.2V7.4M0.9 5.8 Q2.9 5 2.9 6.5 Q2.9 7.8 0.9 7.2M6.6 5.6 Q4.4 5 4.4 6.5 Q4.4 7.8 6.6 7.2" stroke="#222" stroke-width="0.95" fill="none"/></svg><div class="t" style="left:236px;top:340.35px;transform:scaleX(0.940);">Перенос слов</div><svg class="a" style="left:207.5px;top:361px" width="7" height="8" viewBox="0 0 7 8"><circle cx="3" cy="3.4" r="2.2" fill="none" stroke="#d3e2ec" stroke-width="0.8"/><path d="M4.6 5 L6.2 6.8" stroke="#d9d9d9" stroke-width="0.8"/></svg><div class="t" style="left:217px;top:360.65px;transform:scaleX(0.859);color:#c2c2c2;">Поиск</div><div class="btn" style="left:206px;top:372.3px;width:48px;height:12.2px;"></div><svg class="a" style="left:208.3px;top:374.2px" width="9" height="8.5" viewBox="0 0 9 8.5"><path d="M0.5 0.8 H3.2 L4 1.8 H7.2 V7.4 H0.5Z" fill="#efc046" stroke="#d9a93c" stroke-width="0.4"/><path d="M1.8 3.2 H8.6 L7.2 7.4 H0.5Z" fill="#f8d873" stroke="#d9a93c" stroke-width="0.4"/></svg><div class="t" style="left:220px;top:374.05px;transform:scaleX(1.001);">Открыть...</div><div class="btn" style="left:257px;top:372.3px;width:61.4px;height:12.2px;"></div><svg class="a" style="left:259.5px;top:374.5px" width="8" height="8" viewBox="0 0 8 8"><rect x="0.5" y="0.5" width="6.6" height="7" fill="#3d8fd0"/><rect x="1.8" y="0.9" width="4" height="2.6" fill="#e6f1f9"/><rect x="3" y="4.5" width="4.5" height="3.2" fill="#f2f7fb" stroke="#2f6ea5" stroke-width="0.5"/></svg><div class="t" style="left:270px;top:374.05px;transform:scaleX(0.927);">Сохранить как...</div><div class="btn" style="left:516.3px;top:372.3px;width:37px;height:12.2px;"></div><div class="t" style="left:531px;top:374.05px;transform:scaleX(0.768);">OK</div><div class="btn" style="left:556.3px;top:372.3px;width:37.4px;height:12.2px;"></div><div class="t" style="left:565px;top:374.05px;transform:scaleX(0.841);">Отмена</div><div class="t" style="left:309.5px;top:60.55px;transform:scaleX(0.742);">Тема</div><div class="a" style="left:308px;top:70px;width:123px;height:10.3px;box-sizing:border-box;border:0.8px solid #86b2c0;background:#fff;"></div><div class="t" style="left:310px;top:70.65px;transform:scaleX(0.819);">Visual Studio</div><svg class="a" style="left:423.3px;top:73.775px" width="5.5" height="3.75" viewBox="0 0 5.5 3.75"><path d="M0.5 0.7 L2.75 2.75 L5.0 0.7" fill="none" stroke="#1a1a1a" stroke-width="1.35"/></svg><div class="btn" style="left:434.5px;top:69px;width:36.8px;height:12.4px;"></div><div class="t" style="left:445px;top:70.65px;transform:scaleX(0.822);">Новый</div><div class="btn" style="left:475px;top:69px;width:45px;height:12.4px;"></div><div class="t" style="left:478px;top:70.65px;transform:scaleX(0.865);">Сохранить как.</div><div class="btn" style="left:523.5px;top:69px;width:36.8px;height:12.4px;"></div><div class="t" style="left:534px;top:70.65px;transform:scaleX(0.819);">Сброс</div><div class="a" style="left:308px;top:83.8px;width:181px;height:286.2px;box-sizing:border-box;border:1px solid #ececec;background:#fff;"></div><div class="a" style="left:314px;top:84.7px;width:69px;height:0.9px;opacity:.8;background:repeating-linear-gradient(90deg,#cfcfcf 0 2.2px,#f1f1f1 2.2px 3.4px);"></div><div class="a" style="left:402.2px;top:85px;width:0.8px;height:33px;background:#dcdcdc;"></div><svg class="a" style="left:313.5px;top:89.0px" width="3" height="4.6" viewBox="0 0 3 4.6"><path d="M0.6 0.5 L2.4 2.3 L0.6 4.1" fill="none" stroke="#8a8a8a" stroke-width="0.8"/></svg><div class="t" style="left:318.5px;top:86.65px;transform:scaleX(0.912);color:#a3a3a3;">Цвета</div><svg class="a" style="left:313.5px;top:99.8px" width="3" height="4.6" viewBox="0 0 3 4.6"><path d="M0.6 0.5 L2.4 2.3 L0.6 4.1" fill="none" stroke="#8a8a8a" stroke-width="0.8"/></svg><div class="t" style="left:318.5px;top:97.45px;transform:scaleX(0.970);color:#a3a3a3;">Шрифты</div><svg class="a" style="left:313.5px;top:110.60000000000001px" width="3" height="4.6" viewBox="0 0 3 4.6"><path d="M0.6 0.5 L2.4 2.3 L0.6 4.1" fill="none" stroke="#8a8a8a" stroke-width="0.8"/></svg><div class="t" style="left:318.5px;top:108.25px;transform:scaleX(0.946);color:#a3a3a3;">Стили шрифта</div><div class="t" style="left:491.5px;top:85.35px;transform:scaleX(0.900);">Подсветка</div><div class="a" style="left:490.5px;top:95px;width:103.5px;height:10.5px;box-sizing:border-box;border:1px solid #e6e6e6;border-right:0;background:#fff;"></div><div class="t" style="left:493px;top:95.75px;transform:scaleX(0.951);">Text</div><div class="a" style="left:490.5px;top:107px;width:103.5px;height:262.5px;box-sizing:border-box;border:1px solid #e6e6e6;background:#fff;overflow:hidden;"></div><div class="a" style="left:491.5px;top:364px;width:101.5px;height:4.7px;background:#efefef;"></div><div class="a" style="left:491.5px;top:365.4px;width:23.5px;height:1.6px;background:#767676;"></div><div class="a" style="left:0;top:0;width:593.2px;height:430px;overflow:hidden;"><div class="t" style="left:511.4px;top:107.35px;font-size:5.3px;color:#b0b0b0;">1</div><div class="t mono" style="left:517px;top:102.0px;font-size:11.6px;line-height:20px;height:20px;transform:scale(0.5002,0.5);color:#2a2a2a;">Simple text file with</div><div class="a" style="left:512.3px;top:119.4px;width:1.2px;height:0.6px;background:#b5b5b5;"></div><div class="a" style="left:512.3px;top:126.8px;width:1.2px;height:0.6px;background:#b5b5b5;"></div><div class="t mono" style="left:517px;top:117.35px;font-size:11.6px;line-height:20px;height:20px;transform:scale(0.5002,0.5);color:#2c2c9c;">https://www.texteditor</div><div class="a" style="left:512.3px;top:134.20000000000002px;width:1.2px;height:0.6px;background:#b5b5b5;"></div><div class="t mono" style="left:517px;top:124.75px;font-size:11.6px;line-height:20px;height:20px;transform:scale(0.5002,0.5);color:#2c2c9c;">www.texteditor.pro</div><div class="a" style="left:512.3px;top:141.60000000000002px;width:1.2px;height:0.6px;background:#b5b5b5;"></div><div class="t mono" style="left:517px;top:132.15px;font-size:11.6px;line-height:20px;height:20px;transform:scale(0.5002,0.5);color:#2c2c9c;">mailto:info@texteditor</div><div class="a" style="left:512.3px;top:149.0px;width:1.2px;height:0.6px;background:#b5b5b5;"></div><div class="t mono" style="left:517px;top:139.55px;font-size:11.6px;line-height:20px;height:20px;transform:scale(0.5002,0.5);color:#2c2c9c;">news:comp.lang.pascal.</div></div>
</body></html>
